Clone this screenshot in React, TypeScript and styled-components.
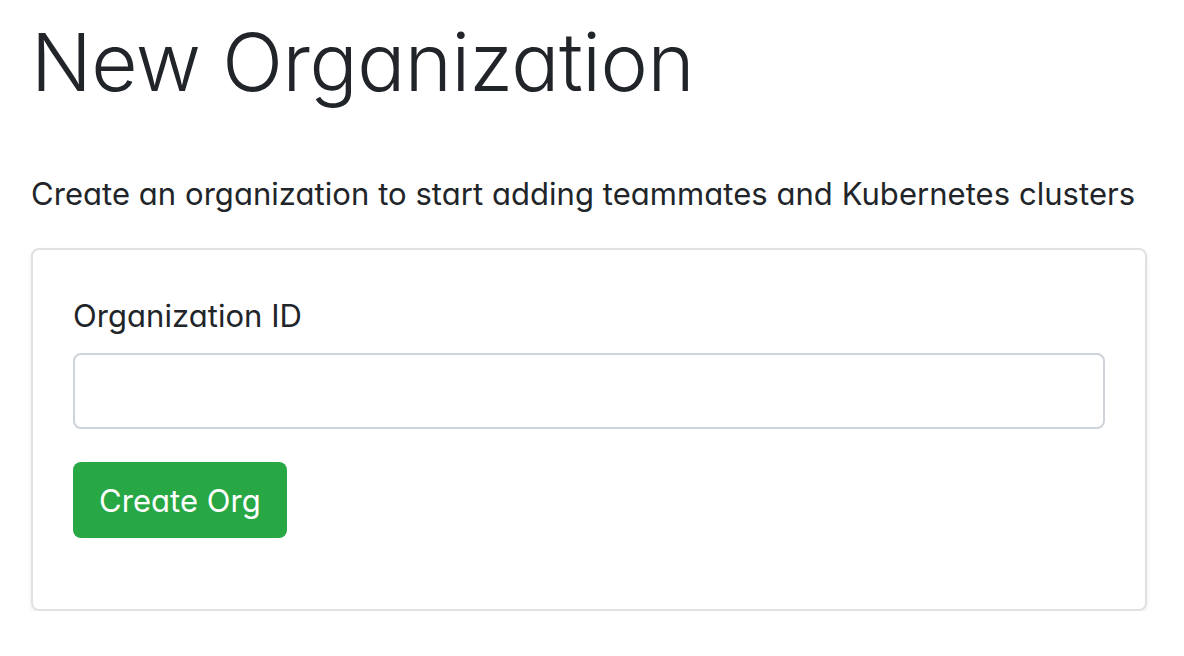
import React from "react";
import styled, { createGlobalStyle } from "styled-components";

const Global = createGlobalStyle`
  html, body { margin: 0; padding: 0; background: #ffffff; }
  body {
    font-family: Inter, "Noto Sans", sans-serif;
    font-feature-settings: "cv11" 1;
    color: #212529;
  }
`;

const Page = styled.main`
  padding: 14px 37px 0 31px;
  display: flex;
  flex-direction: column;
`;

const Title = styled.h1`
  margin: 0;
  font-size: 80px;
  font-weight: 300;
  line-height: 96px;
  letter-spacing: -0.5px;
`;

const Lead = styled.p`
  margin: 60px 0 0 0;
  font-size: 31px;
  line-height: 48px;
  letter-spacing: 0.05px;
`;

const Card = styled.section`
  margin-top: 30px;
  border: 2px solid #dfe1e3;
  border-radius: 8px;
  box-shadow: 0 2px 4px rgba(0, 0, 0, 0.08);
  padding: 40px 40px 71px 40px;
  display: flex;
  flex-direction: column;
`;

const Label = styled.label`
  font-size: 31px;
  line-height: 48px;
  letter-spacing: 0.05px;
  margin-top: 2px;
`;

const Input = styled.input`
  margin-top: 13px;
  height: 76px;
  box-sizing: border-box;
  border: 2px solid #ced4da;
  border-radius: 8px;
  padding: 0 24px;
  font-size: 32px;
  font-family: inherit;
  outline: none;
`;

const Button = styled.button`
  margin-top: 33px;
  align-self: flex-start;
  height: 76px;
  padding: 0 26px;
  background: #28a745;
  color: #ffffff;
  border: none;
  border-radius: 8px;
  font-family: inherit;
  font-feature-settings: "cv11" 1;
  font-size: 31px;
  letter-spacing: 0.05px;
  cursor: pointer;
`;

export default function App() {
  return (
    <>
      <Global />
      <Page>
        <Title>New Organization</Title>
        <Lead>Create an organization to start adding teammates and Kubernetes clusters</Lead>
        <Card>
          <Label htmlFor="org">Organization ID</Label>
          <Input id="org" type="text" />
          <Button type="button">Create Org</Button>
        </Card>
      </Page>
    </>
  );
}
